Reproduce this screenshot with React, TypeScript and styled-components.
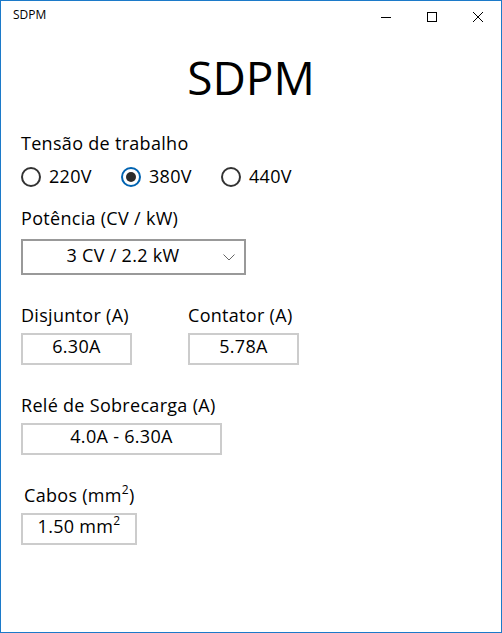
import React from "react";
import styled, { createGlobalStyle } from "styled-components";

const Global = createGlobalStyle`
  html, body { margin: 0; padding: 0; background: #fff; overflow: hidden; }
  * { box-sizing: border-box; }
`;

const Window = styled.div`
  width: 502px;
  height: 633px;
  border: 1px solid #1c7ac9;
  background: #fff;
  display: flex;
  flex-direction: column;
  font-family: "Open Sans", "Noto Sans", sans-serif;
  color: #000;
`;

const TitleBar = styled.div`
  height: 31px;
  display: flex;
  align-items: flex-start;
`;

const TitleText = styled.div`
  flex: 1;
  font-size: 12px;
  line-height: 16px;
  padding: 6px 0 0 12px;
`;

const CtrlButton = styled.div`
  width: 46px;
  height: 31px;
  display: flex;
  align-items: center;
  justify-content: center;
  padding-top: 1px;
`;

const Content = styled.div`
  padding: 0 20px;
  display: flex;
  flex-direction: column;
  align-items: flex-start;
  letter-spacing: 0.3px;
`;

const Heading = styled.h1`
  align-self: stretch;
  margin: 22px 0 0;
  font-weight: 400;
  font-size: 46px;
  line-height: 46px;
  letter-spacing: 0;
  text-align: center;
`;

const Label = styled.div<{ $top: number; $indent?: number }>`
  margin-top: ${(p) => p.$top}px;
  margin-left: ${(p) => p.$indent ?? 0}px;
  font-size: 18px;
  line-height: 24px;
  white-space: nowrap;
`;

const RadioGroup = styled.div`
  margin-top: 12px;
  display: flex;
`;

const RadioItem = styled.label`
  width: 100px;
  height: 20px;
  display: flex;
  align-items: center;
  gap: 8px;
  font-size: 18px;
`;

const RadioText = styled.span`
  line-height: 20px;
  margin-bottom: 3px;
`;

const RadioCircle = styled.span<{ $checked?: boolean }>`
  width: 20px;
  height: 20px;
  border-radius: 50%;
  border: 2px solid ${(p) => (p.$checked ? "#0063b1" : "#333")};
  display: flex;
  align-items: center;
  justify-content: center;
  &::after {
    content: "";
    display: ${(p) => (p.$checked ? "block" : "none")};
    width: 10px;
    height: 10px;
    border-radius: 50%;
    background: #2b2b2b;
  }
`;

const Combo = styled.div`
  margin-top: 9px;
  width: 225px;
  height: 36px;
  border: 2px solid #999;
  display: flex;
  align-items: center;
  padding-left: 9px;
`;

const ComboValue = styled.span`
  flex: 1;
  text-align: center;
  font-size: 18px;
  line-height: 24px;
  padding-bottom: 4px;
`;

const ChevronBox = styled.span`
  width: 30px;
  display: flex;
  align-items: center;
  justify-content: center;
`;

const Row = styled.div`
  display: flex;
  gap: 56px;
`;

const Field = styled.div`
  display: flex;
  flex-direction: column;
  align-items: flex-start;
`;

const ValueBox = styled.div<{ $width: number }>`
  margin-top: 6px;
  width: ${(p) => p.$width}px;
  height: 32px;
  border: 2px solid #ccc;
  text-align: center;
  font-size: 18px;
  line-height: 22px;
  padding-bottom: 6px;
  display: flex;
  align-items: center;
  justify-content: center;
`;

const Sup = styled.sup`
  font-size: 12px;
  line-height: 0;
  vertical-align: 8px;
`;

const Minimize = () => (
  <svg width="10" height="10" viewBox="0 0 10 10">
    <line x1="0" y1="5.5" x2="10" y2="5.5" stroke="#000" strokeWidth="1" />
  </svg>
);
const Maximize = () => (
  <svg width="10" height="10" viewBox="0 0 10 10">
    <rect x="0.5" y="0.5" width="9" height="9" fill="none" stroke="#000" strokeWidth="1" />
  </svg>
);
const Close = () => (
  <svg width="10" height="10" viewBox="0 0 10 10">
    <path d="M0 0 L10 10 M10 0 L0 10" stroke="#000" strokeWidth="1" />
  </svg>
);

const Chevron = () => (
  <svg width="12" height="7" viewBox="0 0 12 7">
    <path d="M0.5 0.5 L6 6 L11.5 0.5" fill="none" stroke="#666" strokeWidth="1" />
  </svg>
);

export default function App() {
  return (
    <>
      <Global />
      <Window>
        <TitleBar>
          <TitleText>SDPM</TitleText>
          <CtrlButton><Minimize /></CtrlButton>
          <CtrlButton><Maximize /></CtrlButton>
          <CtrlButton><Close /></CtrlButton>
        </TitleBar>
        <Content>
          <Heading>SDPM</Heading>
          <Label $top={31}>Tensão de trabalho</Label>
          <RadioGroup>
            <RadioItem><RadioCircle /><RadioText>220V</RadioText></RadioItem>
            <RadioItem><RadioCircle $checked /><RadioText>380V</RadioText></RadioItem>
            <RadioItem><RadioCircle /><RadioText>440V</RadioText></RadioItem>
          </RadioGroup>
          <Label $top={19}>Potência (CV / kW)</Label>
          <Combo>
            <ComboValue>3 CV / 2.2 kW</ComboValue>
            <ChevronBox><Chevron /></ChevronBox>
          </Combo>
          <Row>
            <Field>
              <Label $top={28}>Disjuntor (A)</Label>
              <ValueBox $width={111}>6.30A</ValueBox>
            </Field>
            <Field>
              <Label $top={28}>Contator (A)</Label>
              <ValueBox $width={111}>5.78A</ValueBox>
            </Field>
          </Row>
          <Label $top={28}>Relé de Sobrecarga (A)</Label>
          <ValueBox $width={201}>4.0A - 6.30A</ValueBox>
          <Label $top={28} $indent={3}>
            Cabos (mm<Sup>2</Sup>)
          </Label>
          <ValueBox $width={116}>
            <span>
              1.50 mm<Sup>2</Sup>
            </span>
          </ValueBox>
        </Content>
      </Window>
    </>
  );
}
